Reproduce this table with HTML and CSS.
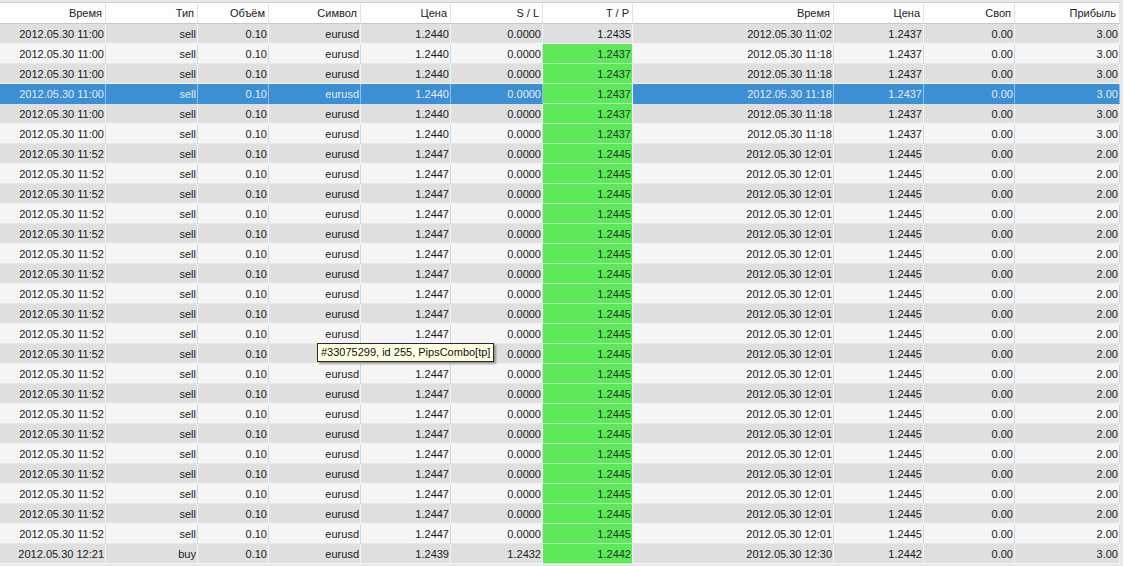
FILE: index.html
```html
<!DOCTYPE html>
<html>
<head>
<meta charset="utf-8">
<link rel="stylesheet" href="styles.css">
</head>
<body>
<div class="wrap">
<table class="grid">
<colgroup>
<col style="width:106px"><col style="width:92px"><col style="width:71px"><col style="width:92px"><col style="width:90px"><col style="width:92px"><col style="width:90px"><col style="width:201px"><col style="width:90px"><col style="width:91px"><col style="width:105px">
</colgroup>
<thead>
<tr><th>Время</th><th>Тип</th><th>Объём</th><th>Символ</th><th>Цена</th><th>S / L</th><th>T / P</th><th>Время</th><th>Цена</th><th>Своп</th><th>Прибыль</th></tr>
</thead>
<tbody id="rows"></tbody>
</table>
<div class="tip">#33075299, id 255, PipsCombo[tp]</div>
</div>
<script src="app.js"></script>
</body>
</html>
```
FILE: app.js
```js
var rows = [];
rows.push(["2012.05.30 11:00","sell","0.10","eurusd","1.2440","0.0000","1.2435","2012.05.30 11:02","1.2437","0.00","3.00",false,false]);
for (var i = 0; i < 5; i++) rows.push(["2012.05.30 11:00","sell","0.10","eurusd","1.2440","0.0000","1.2437","2012.05.30 11:18","1.2437","0.00","3.00",true,i===2]);
for (var j = 0; j < 20; j++) rows.push(["2012.05.30 11:52","sell","0.10","eurusd","1.2447","0.0000","1.2445","2012.05.30 12:01","1.2445","0.00","2.00",true,false]);
rows.push(["2012.05.30 12:21","buy","0.10","eurusd","1.2439","1.2432","1.2442","2012.05.30 12:30","1.2442","0.00","3.00",true,false]);
var html = "";
rows.forEach(function (r, idx) {
  var cls = r[12] ? "sel" : (idx % 2 === 0 ? "odd" : "even");
  html += '<tr class="' + cls + '">';
  for (var k = 0; k < 11; k++) {
    html += '<td' + (k === 6 && r[11] ? ' class="tp"' : '') + '>' + r[k] + '</td>';
  }
  html += '</tr>';
});
document.getElementById("rows").innerHTML = html;
```
FILE: styles.css
```css
html, body {
  margin: 0;
  padding: 0;
  background: #f2f2f2;
}
.wrap {
  position: relative;
  width: 1123px;
  height: 566px;
  overflow: hidden;
  background: #e9e9e9;
}
.grid {
  border-collapse: separate;
  border-spacing: 0;
  table-layout: fixed;
  width: 1120px;
  font-family: "Liberation Sans", Arial, sans-serif;
  font-size: 11px;
  color: #1a1a1a;
  margin-top: 2px;
}
.grid th {
  height: 20px;
  padding: 0 3px 0 0;
  text-align: right;
  font-weight: normal;
  color: #222;
  background: #fdfdfd;
  border-top: 1px solid #d0d0d0;
  border-bottom: 1px solid #c8c8c8;
  border-right: 1px solid #e4e4e4;
  white-space: nowrap;
}
.grid td {
  height: 19px;
  padding: 0 1px 0 0;
  text-align: right;
  white-space: nowrap;
  border-bottom: 1px solid #f6f6f6;
  border-right: 1px solid #f4f4f4;
}
.odd td { background: #dfdfdf; }
.even td { background: #f5f5f5; border-right-color: #d4d9e0; border-bottom-color: #e8e8e8; }
.sel td { background: #3b8fd2; color: #e3edf6; border-right-color: #8fc0e6; border-bottom-color: #3b8fd2; }
.grid td.tp {
  background: #5ee95a;
  color: #1a3a1a;
  border-bottom-color: #b8f5b4;
  border-right-color: #f0f0f0;
}
.sel td.tp { color: #1a3a1a; }
.tip {
  position: absolute;
  left: 317px;
  top: 343px;
  height: 17px;
  line-height: 17px;
  padding: 0 3px;
  background: #ffffe1;
  border: 1px solid #2a2a2a;
  font-family: "Liberation Sans", Arial, sans-serif;
  font-size: 11px;
  color: #101010;
  box-shadow: 2px 2px 2px rgba(0,0,0,0.35);
  white-space: nowrap;
}
```
